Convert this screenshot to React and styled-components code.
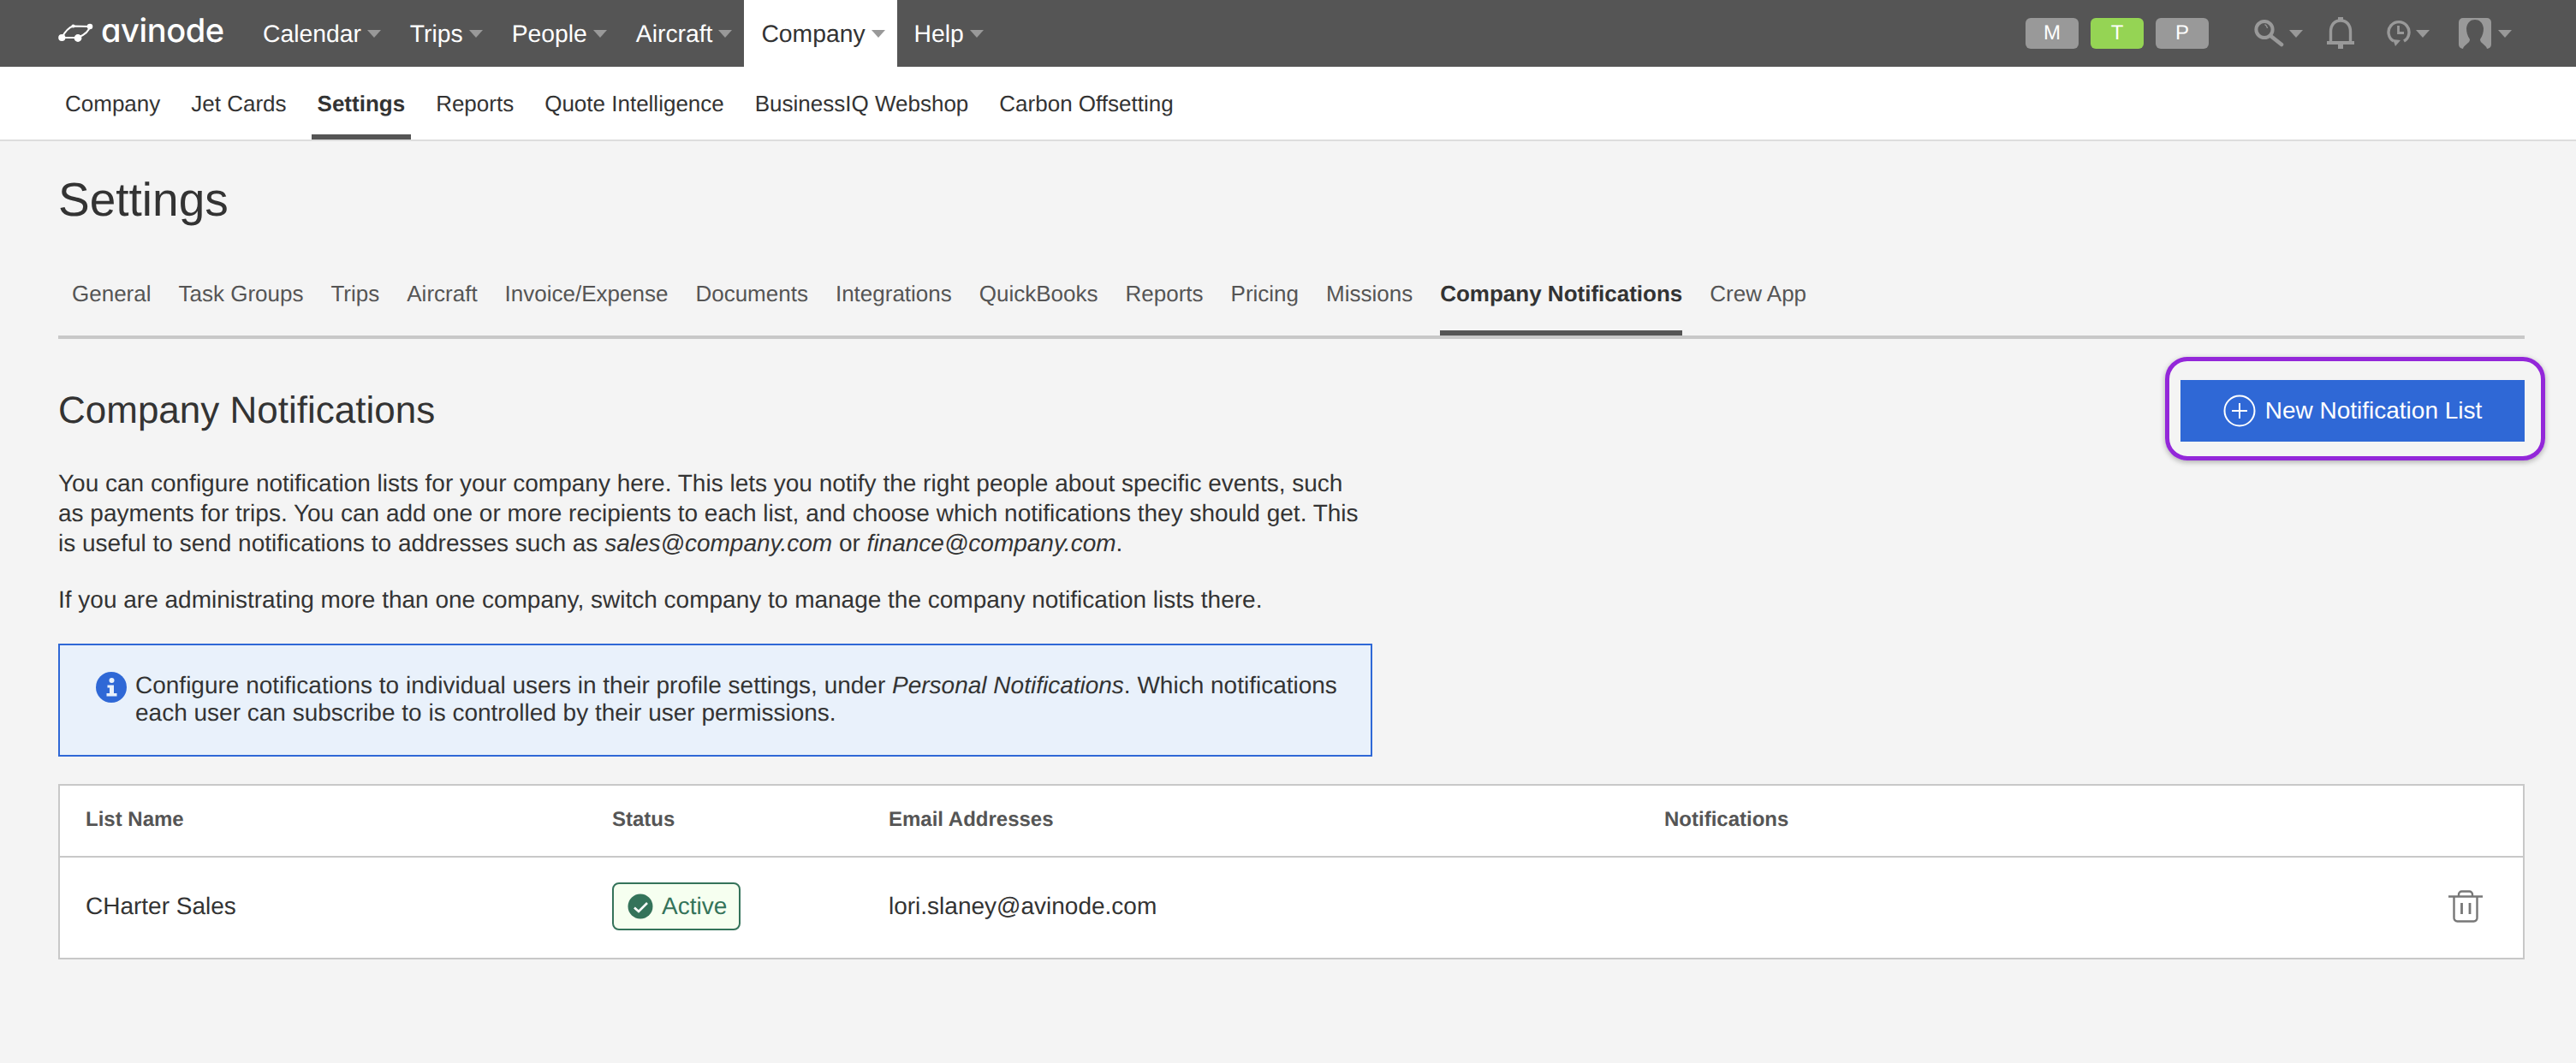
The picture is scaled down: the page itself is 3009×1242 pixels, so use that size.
import React from "react";
import styled, { createGlobalStyle } from "styled-components";

const Global = createGlobalStyle`
  html, body { margin: 0; padding: 0; background: #f4f4f4; }
  body { font-family: "Liberation Sans", Arial, sans-serif; color: #333; min-height: 1242px; text-rendering: geometricPrecision; }
  * { box-sizing: border-box; }
`;

const Page = styled.div`
  position: relative;
  width: 3009px;
  height: 1242px;
  overflow: hidden;
`;

const TopBar = styled.header`
  display: flex;
  align-items: stretch;
  height: 78px;
  background: #555;
  padding-left: 68px;
`;
const Logo = styled.div`
  display: flex;
  align-items: center;
  width: 219px;
  gap: 9px;
  color: #fff;
`;
const LogoWord = styled.span`
  font-family: Inter, "Noto Sans", sans-serif;
  font-feature-settings: "cv11" 1;
  font-size: 38px;
  font-weight: 500;
  letter-spacing: -0.4px;
  line-height: 1;
  margin-top: -6px;
`;
const MainNav = styled.nav`
  display: flex;
  align-items: stretch;
`;
const MainItem = styled.a`
  display: flex;
  align-items: center;
  gap: 7px;
  height: 78px;
  padding: 0 14px 0 20px;
  background: ${(p) => (p.$active ? "#fff" : "transparent")};
  color: ${(p) => (p.$active ? "#333" : "#fff")};
  font-size: 28.3px;
`;
const Caret = styled.i`
  display: block;
  width: 0;
  height: 0;
  border-left: 8px solid transparent;
  border-right: 8px solid transparent;
  border-top: 9px solid #999;
  margin-top: 1px;
`;
const RightTools = styled.div`
  margin-left: auto;
  display: flex;
  align-items: center;
  padding-right: 75px;
`;
const Modes = styled.div`
  display: flex;
  gap: 14px;
  margin-right: 53px;
`;
const Mode = styled.span`
  width: 62px;
  height: 36px;
  display: flex;
  align-items: center;
  justify-content: center;
  border-radius: 6px;
  background: ${(p) => (p.$on ? "#95d454" : "#999")};
  color: #fff;
  font-size: 24px;
`;
const Tool = styled.span`
  display: flex;
  align-items: center;
  gap: ${(p) => p.$gap || 6}px;
  margin-right: ${(p) => p.$mr || 0}px;
  color: #999;
  & > svg { filter: blur(0.5px); }
`;

const SubBar = styled.nav`
  display: flex;
  height: 87px;
  padding: 0 0 0 69px;
  background: #fff;
  border-bottom: 2px solid #ddd;
`;
const SubItem = styled.a`
  display: flex;
  align-items: center;
  height: 85px;
  padding: 2px 7px 0;
  margin-right: 22px;
  font-size: 26px;
  color: #333;
  font-weight: ${(p) => (p.$active ? 700 : 400)};
  box-shadow: ${(p) => (p.$active ? "inset 0 -6px 0 #555" : "none")};
`;

const Main = styled.main`
  padding: 36px 60px 0 68px;
`;
const Title = styled.h1`
  margin: 0;
  font-size: 55px;
  line-height: 64px;
  font-weight: 400;
  color: #333;
`;
const Tabs = styled.nav`
  display: flex;
  gap: 32px;
  height: 92px;
  margin-top: 39px;
  padding-left: 16px;
  border-bottom: 4px solid #c8c8c8;
`;
const Tab = styled.a`
  display: flex;
  align-items: center;
  height: 88px;
  padding-bottom: 9px;
  font-size: 26px;
  color: ${(p) => (p.$active ? "#333" : "#555")};
  font-weight: ${(p) => (p.$active ? 700 : 400)};
  box-shadow: ${(p) => (p.$active ? "inset 0 -6px 0 #555" : "none")};
`;
const SectionHead = styled.div`
  display: flex;
  align-items: center;
  justify-content: space-between;
  margin-top: 48px;
  height: 72px;
`;
const Heading = styled.h2`
  margin: 0;
  font-size: 44px;
  font-weight: 400;
  color: #333;
`;
const PrimaryButton = styled.button`
  position: relative;
  display: flex;
  align-items: center;
  justify-content: center;
  gap: 11px;
  width: 402px;
  height: 72px;
  border: 0;
  padding: 0;
  background: #2f68d6;
  color: #fff;
  font-family: inherit;
  font-size: 28px;
`;
const Highlight = styled.span`
  position: absolute;
  left: -18px;
  right: -24px;
  top: -27px;
  bottom: -22px;
  border: 5px solid #9327d9;
  border-radius: 26px;
  box-shadow: 0 2px 6px rgba(0, 0, 0, 0.3);
  pointer-events: none;
`;
const Copy = styled.p`
  width: 1536px;
  margin: ${(p) => p.$top}px 0 0;
  font-size: 28px;
  line-height: 35px;
  color: #333;
`;
const Notice = styled.div`
  display: flex;
  align-items: center;
  gap: 10px;
  width: 1535px;
  height: 132px;
  margin-top: 34px;
  padding-left: 42px;
  background: #e9f1fb;
  border: 2px solid #2f68d6;
`;
const NoticeIcon = styled.svg`
  flex: none;
  width: 36px;
  height: 36px;
  margin-top: -30px;
`;
const NoticeText = styled.div`
  font-size: 28px;
  line-height: 32px;
  margin-top: -2px;
  color: #333;
`;
const Table = styled.section`
  margin-top: 32px;
  background: #fff;
  border: 2px solid #c8c8c8;
`;
const Row = styled.div`
  display: grid;
  grid-template-columns: 645px 323px 906px 1fr;
  align-items: center;
  height: ${(p) => p.$h}px;
`;
const HeadRow = styled(Row)`
  border-bottom: 2px solid #c8c8c8;
  padding-bottom: 3px;
`;
const HeadCell = styled.div`
  font-size: 24px;
  font-weight: 700;
  color: #555;
  padding-left: ${(p) => p.$pad || 0}px;
`;
const Cell = styled.div`
  font-size: 28px;
  color: #333;
  padding-left: ${(p) => p.$pad || 0}px;
  display: flex;
  align-items: center;
  justify-content: ${(p) => (p.$end ? "flex-end" : "flex-start")};
`;
const BodyRow = styled(Row)`
  padding-bottom: 3px;
`;
const StatusBadge = styled.span`
  display: inline-flex;
  align-items: center;
  gap: 10px;
  width: 150px;
  height: 56px;
  padding-left: 16px;
  border: 2px solid #34735a;
  border-radius: 8px;
  background: #f6fff0;
  color: #34735a;
  font-size: 28px;
`;
const TrashButton = styled.span`
  display: flex;
  margin-right: 47px;
  color: #777;
`;

const sub = ["Company", "Jet Cards", "Settings", "Reports", "Quote Intelligence", "BusinessIQ Webshop", "Carbon Offsetting"];
const tabs = ["General", "Task Groups", "Trips", "Aircraft", "Invoice/Expense", "Documents", "Integrations", "QuickBooks", "Reports", "Pricing", "Missions", "Company Notifications", "Crew App"];
const main = ["Calendar", "Trips", "People", "Aircraft", "Company", "Help"];

const LogoMark = () => (
  <svg width="41" height="24" viewBox="0 0 41 24" fill="none" style={{ flex: "none" }}>
    <path d="M4 17 C8 10 12 5 17.5 3.5 L37 4 C36 9 30 14 23 17 Z" stroke="#fff" strokeWidth="2" />
    <circle cx="4.3" cy="17" r="4.1" fill="#fff" />
    <circle cx="23" cy="17.5" r="4.4" fill="#fff" />
    <circle cx="37" cy="4" r="3.3" fill="#fff" />
    <circle cx="17.5" cy="3.5" r="2.1" fill="#fff" />
  </svg>
);
const SearchIcon = () => (
  <svg width="35" height="34" viewBox="0 0 35 34" fill="none" stroke="#999">
    <circle cx="12" cy="12.5" r="9.6" strokeWidth="4" />
    <path d="M20 20.5 L32 30" strokeWidth="4.6" strokeLinecap="round" />
    <path d="M12.5 6.5 A6 6 0 0 1 15.5 11" strokeWidth="1.3" />
  </svg>
);
const BellIcon = () => (
  <svg width="32" height="38" viewBox="0 0 32 38" fill="none" stroke="#999">
    <path d="M4.5 29 V17 C4.5 9 9 4 16 4 C23 4 27.5 9 27.5 17 V29" strokeWidth="3.4" />
    <path d="M0 30 H32" strokeWidth="4" />
    <path d="M16 0 V5 M16 32 V37" strokeWidth="6" />
  </svg>
);
const HistoryIcon = () => (
  <svg width="28" height="32" viewBox="0 0 28 32" fill="none" stroke="#999">
    <path d="M8 25 A12 12 0 1 1 20 25" strokeWidth="3.4" />
    <path d="M7 23 L16 24 L10 31 Z" fill="#999" stroke="none" />
    <path d="M13.5 7 V15.5 H20" strokeWidth="2.8" />
  </svg>
);
const UserIcon = () => (
  <svg width="38" height="36" viewBox="0 0 38 36">
    <path fill="#999" d="M5 0 H33 A5 5 0 0 1 38 5 V31 A5 5 0 0 1 33 36 C32 31 25 30 25 25 C28 21 29 16 29 12 C28 5 24 2 19 2 C14 2 10 5 9 12 C9 16 10 21 13 25 C13 30 6 31 5 36 A5 5 0 0 1 0 31 V5 A5 5 0 0 1 5 0 Z" />
  </svg>
);

export default function App() {
  return (
    <Page>
      <Global />
      <TopBar>
        <Logo>
          <LogoMark />
          <LogoWord>avinode</LogoWord>
        </Logo>
        <MainNav>
          {main.map((m) => (
            <MainItem key={m} $active={m === "Company"}>
              {m}
              <Caret />
            </MainItem>
          ))}
        </MainNav>
        <RightTools>
          <Modes>
            <Mode>M</Mode>
            <Mode $on>T</Mode>
            <Mode>P</Mode>
          </Modes>
          <Tool $mr={28}><SearchIcon /><Caret /></Tool>
          <Tool $mr={38}><BellIcon /></Tool>
          <Tool $mr={34}><HistoryIcon /><Caret /></Tool>
          <Tool $gap={8}><UserIcon /><Caret /></Tool>
        </RightTools>
      </TopBar>
      <SubBar>
        {sub.map((s) => (
          <SubItem key={s} $active={s === "Settings"}>{s}</SubItem>
        ))}
      </SubBar>
      <Main>
        <Title>Settings</Title>
        <Tabs>
          {tabs.map((t) => (
            <Tab key={t} $active={t === "Company Notifications"}>{t}</Tab>
          ))}
        </Tabs>
        <SectionHead>
          <Heading>Company Notifications</Heading>
          <PrimaryButton>
            <Highlight />
            <svg width="38" height="38" viewBox="0 0 38 38" fill="none" stroke="#fff" strokeWidth="2">
              <circle cx="19" cy="19" r="17.5" />
              <path d="M19 10 V28 M10 19 H28" />
            </svg>
            New Notification List
          </PrimaryButton>
        </SectionHead>
        <Copy $top={31}>
          You can configure notification lists for your company here. This lets you notify the right people about specific events, such as payments for trips. You can add one or more recipients to each list, and choose which notifications they should get. This is useful to send notifications to addresses such as <em>sales@company.com</em> or <em>finance@company.com</em>.
        </Copy>
        <Copy $top={31}>
          If you are administrating more than one company, switch company to manage the company notification lists there.
        </Copy>
        <Notice>
          <NoticeIcon viewBox="0 0 36 36">
            <circle cx="18" cy="18" r="18" fill="#2f68d6" />
            <circle cx="18.5" cy="10" r="3" fill="#e9f1fb" />
            <path d="M13.5 15.5 H21 V25 H24.5 V28.5 H12.5 V25 H16 V18.5 H13.5 Z" fill="#e9f1fb" />
          </NoticeIcon>
          <NoticeText>
            Configure notifications to individual users in their profile settings, under <em>Personal Notifications</em>. Which notifications<br />
            each user can subscribe to is controlled by their user permissions.
          </NoticeText>
        </Notice>
        <Table>
          <HeadRow $h={84}>
            <HeadCell $pad={30}>List Name</HeadCell>
            <HeadCell>Status</HeadCell>
            <HeadCell>Email Addresses</HeadCell>
            <HeadCell>Notifications</HeadCell>
          </HeadRow>
          <BodyRow $h={117}>
            <Cell $pad={30}>CHarter Sales</Cell>
            <Cell>
              <StatusBadge>
                <svg width="30" height="30" viewBox="0 0 30 30">
                  <circle cx="15" cy="15" r="14.5" fill="#34735a" />
                  <path d="M8 16.5 L13 21 L23 11" fill="none" stroke="#fff" strokeWidth="2.6" />
                </svg>
                Active
              </StatusBadge>
            </Cell>
            <Cell>lori.slaney@avinode.com</Cell>
            <Cell $end>
              <TrashButton>
                <svg width="40" height="38" viewBox="0 0 40 38" fill="none" stroke="currentColor" strokeWidth="2.4">
                  <path d="M0 7.5 H40" />
                  <path d="M12 7 V5 A3.5 3.5 0 0 1 15.5 1.5 H24.5 A3.5 3.5 0 0 1 28 5 V7" />
                  <path d="M6.5 8 V32 A4 4 0 0 0 10.5 36.5 H29.5 A4 4 0 0 0 33.5 32 V8" />
                  <path d="M15.5 15 V28 M25 15 V28" strokeWidth="2.8" />
                </svg>
              </TrashButton>
            </Cell>
          </BodyRow>
        </Table>
      </Main>
    </Page>
  );
}
